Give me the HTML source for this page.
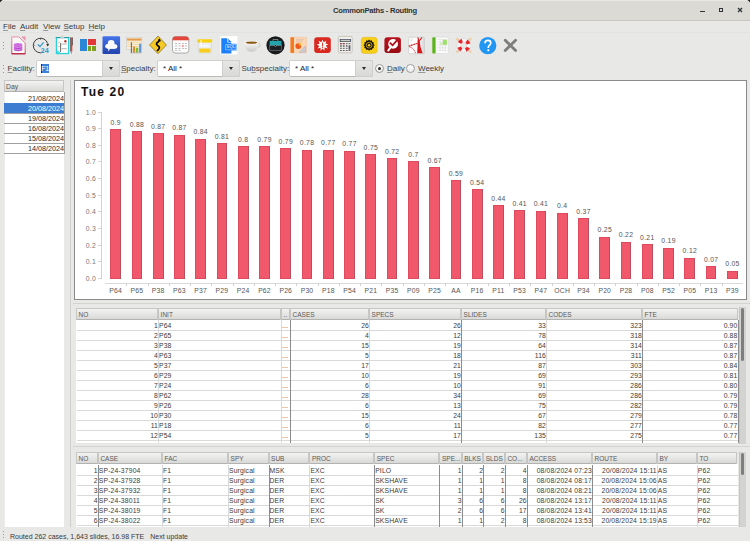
<!DOCTYPE html><html><head><meta charset="utf-8"><style>
*{margin:0;padding:0;box-sizing:border-box}
html,body{width:750px;height:541px;overflow:hidden;background:#e8e8e7;font-family:"Liberation Sans",sans-serif;color:#2e3436;position:relative}
.abs{position:absolute}
.t{position:absolute;white-space:nowrap;line-height:1}
#title{left:0;top:0;width:750px;height:21px;background:#dcdad5;border-bottom:1px solid #c9c6c1}
.menu{font-size:8px;top:23px;color:#3a3a3a}
u{text-decoration:underline;text-decoration-thickness:0.6px;text-underline-offset:0.6px;text-decoration-color:#9a9a9a}
.ico{position:absolute;top:36px;width:18px;height:18px}
.grip{position:absolute;width:1px;height:1px;background:#9a9a9a}
.combo{position:absolute;top:60px;height:17.4px;background:#fff;border:1px solid #cfcfcd;border-bottom-color:#b9b9b7;border-radius:2px}
.cbtn{position:absolute;top:-1px;right:-1px;height:17.4px;width:18px;background:linear-gradient(#e6e6e5,#d9d9d8);border:1px solid #cfcfcd;border-radius:0 2px 2px 0}
.cbtn:after{content:"";position:absolute;left:6px;top:6px;border-left:2.9px solid transparent;border-right:2.9px solid transparent;border-top:3px solid #2a2a2a}
.lbl{font-size:8px;top:65px;color:#3c3c3c}
.hdr{position:absolute;height:12px;background:linear-gradient(#f3f3f2,#d9d9d8);border:1px solid #c6c6c4;border-bottom-color:#b2b2b0;border-radius:1px;font-size:6.5px;color:#5a5a5a;padding-left:1.6px;line-height:11px;overflow:hidden;white-space:nowrap}
.cell{position:absolute;height:10px;font-size:6.8px;line-height:11px;letter-spacing:0.15px;white-space:nowrap;overflow:hidden;color:#3a3a3a}
.r{text-align:right}
</style></head><body>
<div id="title" class="abs"></div>
<div class="abs" style="left:0;top:0;width:3px;height:3px;background:radial-gradient(circle at 3px 3px,transparent 2.5px,#222 3px)"></div>
<div class="abs" style="right:0;top:0;width:3px;height:3px;background:radial-gradient(circle at 0 3px,transparent 2.5px,#222 3px)"></div>
<div class="t" style="left:0;width:750px;text-align:center;top:7px;font-size:7.6px;letter-spacing:-0.25px;font-weight:bold;color:#2e3436">CommonPaths - Routing</div>
<div class="abs" style="left:700px;top:11px;width:4.5px;height:1.1px;background:#2e3436"></div>
<div class="abs" style="left:719px;top:8px;width:4px;height:4px;border:1.2px solid #2e3436"></div>
<svg class="abs" style="left:737px;top:7px" width="6" height="6" viewBox="0 0 6 6"><path d="M1 1L5 5M5 1L1 5" stroke="#2e3436" stroke-width="1.3"/></svg>
<div class="abs" style="left:0;top:32px;width:750px;height:1px;background:#e2e2e0"></div>
<div class="abs" style="left:3px;top:0;width:744px;height:1px;background:#e9e7e3"></div>
<div class="t menu" style="left:3px"><u>F</u>ile</div>
<div class="t menu" style="left:20px"><u>A</u>udit</div>
<div class="t menu" style="left:43px"><u>V</u>iew</div>
<div class="t menu" style="left:63.5px"><u>S</u>etup</div>
<div class="t menu" style="left:88.5px"><u>H</u>elp</div>
<div class="grip" style="left:3px;top:41.5px"></div>
<div class="grip" style="left:3px;top:44.8px"></div>
<div class="grip" style="left:3px;top:48px"></div>
<div class="grip" style="left:3px;top:64.8px"></div>
<div class="grip" style="left:3px;top:68px"></div>
<div class="grip" style="left:3px;top:71.5px"></div>
<svg class="abs" style="left:10.5px;top:35.5px;overflow:visible" width="15" height="19" viewBox="0 0 15 19">
<defs><linearGradient id="g1" x1="0" y1="0" x2="0" y2="1"><stop offset="0" stop-color="#ea8aa6"/><stop offset="1" stop-color="#c2354f"/></linearGradient>
<linearGradient id="p1" x1="0" y1="0" x2="0" y2="1"><stop offset="0" stop-color="#d774e6"/><stop offset="1" stop-color="#b040c8"/></linearGradient></defs>
<path d="M0.8 0.9H7.9L14.2 7V17.8H0.8Z" fill="#f8f8f7" stroke="url(#g1)" stroke-width="0.9"/>
<rect x="0.6" y="17.2" width="13.8" height="1.1" fill="#b8203c"/>
<path d="M10.4 0.5H14.5V4.9Z" fill="#e890ac"/>
<ellipse cx="7.1" cy="13.6" rx="4.2" ry="1.6" fill="url(#p1)"/>
<rect x="2.9" y="8.6" width="8.4" height="5" fill="url(#p1)"/>
<ellipse cx="7.1" cy="8.6" rx="4.2" ry="1.6" fill="#cf6ee0"/>
<path d="M3 10.6Q7.1 12.4 11.2 10.6M3 12.9Q7.1 14.7 11.2 12.9" stroke="#eab4f2" stroke-width="0.55" fill="none"/>
</svg>
<svg class="abs" style="left:32px;top:36.5px;overflow:visible" width="18" height="17" viewBox="0 0 18 17">
<path d="M11.5 15.2A7.3 7.3 0 1 1 15.6 6.5" fill="none" stroke="#2b2b2b" stroke-width="0.9"/>
<path d="M14.2 7.2L15.8 9.6L17.2 6.8Z" fill="#2b2b2b"/>
<path d="M8.6 1.2V2.6" stroke="#2b2b2b" stroke-width="0.8"/>
<circle cx="2.8" cy="8.3" r="0.45" fill="#2b2b2b"/>
<path d="M5.8 7.6L8.0 9.6L11.6 5.4" fill="none" stroke="#3a9ad0" stroke-width="1.3"/>
<text x="8.8" y="16.2" font-family="Liberation Sans" font-weight="bold" font-size="7.2" fill="#3a93c8">24</text>
</svg>
<svg class="abs" style="left:55px;top:35px;overflow:visible" width="18.5" height="20" viewBox="0 0 18.5 20">
<rect x="1.45" y="2.65" width="12.2" height="15.9" fill="#fff" stroke="#2cd0d8" stroke-width="1.3"/>
<rect x="0.8" y="2" width="13.5" height="0.9" fill="#1f9aa0"/>
<path d="M2.2 14.8L5.4 18.2H2.2Z" fill="#30dfe6"/>
<path d="M5 3.6L9.6 3.6L8.6 1.8L7.3 0.3L6 1.8Z" fill="#cfcfcf"/>
<circle cx="10.4" cy="6.2" r="1.2" fill="#b03a30"/>
<path d="M3 6.9L4 7.8L5.6 6.2M3 11L4 11.9L5.6 10.3" stroke="#f0a080" stroke-width="0.7" fill="none"/>
<rect x="5.3" y="8" width="0.8" height="9" fill="#444"/>
<path d="M6.5 9H11.8M6.5 13.7H11.8" stroke="#aaa" stroke-width="0.9"/>
<rect x="15" y="2.4" width="0.8" height="14" fill="#555"/>
<rect x="15.8" y="2.4" width="1.5" height="14" fill="#ee3a3a"/>
<rect x="17.3" y="2.4" width="0.7" height="8" fill="#444"/>
<path d="M16.4 16.4V18.6" stroke="#666" stroke-width="0.7"/>
</svg>
<div class="abs" style="left:80px;top:39px;width:7px;height:12px;background:#2a86d6"></div>
<div class="abs" style="left:87.6px;top:39px;width:8.3px;height:5.9px;background:#e33636"></div>
<div class="abs" style="left:87.6px;top:46px;width:3.6px;height:5px;background:#7e9f1e"></div>
<div class="abs" style="left:92px;top:46px;width:3.9px;height:5px;background:#7e9f1e"></div>
<svg class="abs" style="left:101.5px;top:35.8px;overflow:visible" width="18.4" height="18.4" viewBox="0 0 18.4 18.4">
<defs><linearGradient id="g5" x1="0" y1="0" x2="0" y2="1"><stop offset="0" stop-color="#4273ea"/><stop offset="1" stop-color="#2345ae"/></linearGradient></defs>
<rect x="0.5" y="0.3" width="17.6" height="17.6" rx="1.2" fill="url(#g5)"/>
<g fill="#fbfbfb"><circle cx="9.2" cy="7.5" r="3.4"/><circle cx="5.5" cy="10.3" r="2.3"/><circle cx="13.2" cy="10.4" r="2.2"/><rect x="5.4" y="8.5" width="8" height="4.4"/>
<path d="M6.2 12.5H8.4L6.4 15.2Q5.6 15.3 6.4 14.2Z"/></g>
</svg>
<svg class="abs" style="left:126px;top:36.5px;overflow:visible" width="17" height="17" viewBox="0 0 17 17">
<rect x="0.5" y="0.3" width="15.4" height="12.2" fill="#f6f0e4" stroke="#c8c4bc" stroke-width="0.5"/>
<rect x="1" y="1.5" width="14.5" height="2.1" fill="#e39a4a"/>
<path d="M1 5.2H15.5M1 7.3H15.5M1 9.4H15.5" stroke="#f2d79c" stroke-width="1"/>
<rect x="4.9" y="5.3" width="0.75" height="10.7" fill="#333"/>
<rect x="6.9" y="9.5" width="2.2" height="6.1" fill="#e8892a"/>
<rect x="10" y="10.7" width="2.2" height="4.9" fill="#7cbf2a"/>
<rect x="13.1" y="6.7" width="2.2" height="8.9" fill="#5f95d8"/>
<rect x="4.6" y="15.6" width="11" height="0.6" fill="#999"/>
</svg>
<svg class="abs" style="left:148.5px;top:36px;overflow:visible" width="18" height="18" viewBox="0 0 18 18">
<path d="M9 0.1L17.5 9L9 17.7L0.5 9Z" fill="#f7c924" stroke="#4a3a00" stroke-width="0.5"/>
<path d="M8.4 14.6C9.4 13.4 11.4 12.2 10 10.6C8.6 9.2 6.6 8.8 7.6 7.2C8.4 6 10.2 6.2 10.2 4.2" fill="none" stroke="#000" stroke-width="1.6" stroke-linecap="round"/>
<path d="M8.6 5.4L10.2 2.2L12 5.2Z" fill="#000"/>
</svg>
<svg class="abs" style="left:172.3px;top:36.4px;overflow:visible" width="17.4" height="17.6" viewBox="0 0 17.4 17.6">
<defs><clipPath id="c8"><rect x="0.5" y="0.5" width="16.3" height="16.6" rx="3"/></clipPath></defs>
<rect x="0.5" y="0.5" width="16.3" height="16.6" rx="3" fill="#fbfbfb" stroke="#6a6a6a" stroke-width="0.5"/>
<rect x="0" y="0" width="17.4" height="4.3" fill="#e5453a" clip-path="url(#c8)"/>
<g fill="#bdbdbd"><rect x="3" y="7" width="2.2" height="0.9"/><rect x="6.5" y="7" width="2.2" height="0.9"/><rect x="10" y="7" width="2.2" height="0.9"/><rect x="13" y="7" width="2" height="0.9"/>
<rect x="3" y="9.5" width="2.2" height="0.9"/><rect x="6.5" y="9.5" width="2.2" height="0.9"/><rect x="13" y="9.5" width="2" height="0.9"/>
<rect x="3" y="12" width="2.2" height="0.9"/><rect x="6.5" y="12" width="2.2" height="0.9"/><rect x="10" y="12" width="2.2" height="0.9"/><rect x="13" y="12" width="2" height="0.9"/>
<rect x="3" y="14.2" width="2.2" height="0.8"/><rect x="6.5" y="14.2" width="2.2" height="0.8"/></g>
<rect x="10.3" y="9.2" width="1.2" height="1.5" fill="#e5453a"/>
</svg>
<svg class="abs" style="left:196.8px;top:38.5px;overflow:visible" width="16" height="15" viewBox="0 0 16 15">
<rect x="1.3" y="3.2" width="13.1" height="10.8" rx="0.6" fill="#eceef0" stroke="#d2d4d6" stroke-width="0.6"/>
<rect x="2.1" y="9.5" width="11.3" height="4.1" fill="#f9cd1c"/>
<rect x="0.2" y="0.3" width="15" height="3.3" rx="1.3" fill="#f7d10c"/>
<rect x="3.4" y="1.2" width="1.3" height="5.5" fill="#fdfdfd" opacity="0.85"/>
<rect x="3.2" y="6.5" width="8.6" height="0.9" fill="#fff"/>
</svg>
<svg class="abs" style="left:219.5px;top:35.7px;overflow:visible" width="17.6" height="18.5" viewBox="0 0 17.6 18.5">
<rect x="0.3" y="0.2" width="17.1" height="18.3" fill="#fff"/>
<path d="M1.3 2.3H7.4V6.6H11.4V17.4H1.3Z" fill="#1c7ffb"/>
<path d="M8.3 2.7L11.5 6.1H8.3Z" fill="#1c7ffb"/>
<rect x="4.8" y="7.8" width="11.8" height="6.7" rx="0.6" fill="#1c7ffb"/>
<rect x="5.5" y="8.5" width="10.4" height="5.3" rx="0.4" fill="none" stroke="#fff" stroke-width="0.4"/>
<text x="6.6" y="12.5" font-family="Liberation Sans" font-size="4.2" letter-spacing="0.1" fill="#fff">SQL</text>
</svg>
<svg class="abs" style="left:243.5px;top:39.5px;overflow:visible" width="17" height="12.5" viewBox="0 0 17 12.5">
<defs><linearGradient id="g11" x1="0" y1="0" x2="0" y2="1"><stop offset="0" stop-color="#fafafa"/><stop offset="1" stop-color="#c9c9c9"/></linearGradient></defs>
<circle cx="14" cy="5.2" r="1.9" fill="none" stroke="#d0d0d0" stroke-width="1.2"/>
<path d="M0.8 2.2Q0.6 11.8 7.5 11.8Q14.4 11.8 14.2 2.2Z" fill="url(#g11)"/>
<ellipse cx="7.5" cy="2.3" rx="6.7" ry="1.6" fill="#fff"/>
<ellipse cx="7.5" cy="2.6" rx="5.9" ry="1.2" fill="#8a5a14"/>
</svg>
<svg class="abs" style="left:265.5px;top:35.8px;overflow:visible" width="19" height="18.6" viewBox="0 0 19 18.6">
<circle cx="9.5" cy="9.3" r="9.1" fill="#17191b"/>
<path d="M7 4.9V3.5H12V4.9" fill="none" stroke="#9aa" stroke-width="0.7"/>
<rect x="3.6" y="4.9" width="11.9" height="4.8" fill="#22a3ad"/>
<rect x="3.8" y="9.7" width="11.5" height="5" fill="#1c2024" stroke="#8c9295" stroke-width="0.5"/>
<circle cx="9.5" cy="9.6" r="0.9" fill="#111" stroke="#ccc" stroke-width="0.4"/>
</svg>
<svg class="abs" style="left:290px;top:37px;overflow:visible" width="17" height="16.4" viewBox="0 0 17 16.4">
<rect x="0.5" y="0.3" width="16" height="15.6" rx="0.8" fill="#fbd7b6" stroke="#f0b890" stroke-width="0.4"/>
<rect x="0.5" y="0.3" width="3.5" height="15.6" fill="#f47b20"/>
<path d="M6 2.5H14M6 3.8H13M6 5H12" stroke="#d8b8a0" stroke-width="0.5"/>
<circle cx="8.3" cy="9.1" r="2.9" fill="#f05a1a"/>
<path d="M8.9 5.6A2.9 2.9 0 0 1 11.6 8.4L8.9 8.4Z" fill="#f9bd2a"/>
<path d="M15.5 9L15.5 15.2H9.4Z" fill="#c9ced8" stroke="#9aa0b0" stroke-width="0.4"/>
</svg>
<svg class="abs" style="left:314px;top:37px;overflow:visible" width="17" height="16.2" viewBox="0 0 17 16.2">
<rect x="0.2" y="0.2" width="16.6" height="15.8" rx="3" fill="#d8281f"/>
<path d="M8.5 2.5L9.6 5.2L12.4 3.8L11.4 6.6L14.6 7.2L11.8 8.6L13.8 11.4L10.6 10.6L10.4 13.6L8.6 11.4L6.6 13.8L6.6 10.8L3.6 11.6L5.4 9L2.6 7.6L5.6 6.8L4.6 3.8L7.4 5.2Z" fill="#fff"/>
<rect x="8.1" y="5.6" width="1" height="3.9" fill="#d8281f"/>
<rect x="8.1" y="10" width="1" height="1" fill="#d8281f"/>
</svg>
<svg class="abs" style="left:338.3px;top:36px;overflow:visible" width="14.6" height="17.2" viewBox="0 0 14.6 17.2">
<rect x="0.4" y="0.4" width="13.8" height="16.4" rx="1.2" fill="#f2efe8" stroke="#b8b4ae" stroke-width="0.7"/>
<rect x="1.8" y="3" width="11" height="3" fill="#2c3558"/>
<rect x="2.5" y="3.6" width="9.6" height="1.8" fill="#c8cbb8"/>
<g fill="#555a66"><rect x="2" y="7.2" width="1.8" height="1"/><rect x="4.8" y="7.2" width="1.8" height="1"/><rect x="7.8" y="7.2" width="1.8" height="1"/><rect x="10.6" y="7.2" width="1.8" height="1"/>
<rect x="2" y="9.3" width="1.8" height="1.4"/><rect x="4.8" y="9.3" width="1.8" height="1.4"/><rect x="7.8" y="9.3" width="1.8" height="1.4"/><rect x="10.6" y="9.3" width="1.8" height="4.4"/>
<rect x="2" y="11.8" width="1.8" height="1"/><rect x="4.8" y="11.8" width="1.8" height="1"/><rect x="7.8" y="11.8" width="1.8" height="1"/>
<rect x="2" y="14" width="1.8" height="1"/><rect x="4.8" y="14" width="1.8" height="1"/><rect x="7.8" y="14" width="1.8" height="1"/><rect x="10.6" y="14" width="1.8" height="1"/></g>
<rect x="2" y="7.2" width="1.8" height="1" fill="#b03040"/><rect x="4.8" y="7.2" width="1.8" height="1" fill="#b03040"/>
</svg>
<svg class="abs" style="left:361px;top:36.8px;overflow:visible" width="16.4" height="16.6" viewBox="0 0 16.4 16.6">
<rect x="0.2" y="0.2" width="16" height="16.3" rx="3" fill="#f7cf1a" stroke="#c9a000" stroke-width="0.3"/>
<path d="M13.70 8.20L12.45 9.36L12.95 11.00L11.28 11.38L10.90 13.05L9.26 12.55L8.10 13.80L6.94 12.55L5.30 13.05L4.92 11.38L3.25 11.00L3.75 9.36L2.50 8.20L3.75 7.04L3.25 5.40L4.92 5.02L5.30 3.35L6.94 3.85L8.10 2.60L9.26 3.85L10.90 3.35L11.28 5.02L12.95 5.40L12.45 7.04Z" fill="#1a1206"/>
<circle cx="8.1" cy="8.2" r="2.9" fill="none" stroke="#f7cf1a" stroke-width="0.7"/>
<circle cx="8.1" cy="8.2" r="1.3" fill="#f7cf1a"/>
</svg>
<svg class="abs" style="left:384px;top:36.7px;overflow:visible" width="17.3" height="16.7" viewBox="0 0 17.3 16.7">
<defs><linearGradient id="g17" x1="0" y1="0" x2="0" y2="1"><stop offset="0" stop-color="#b81420"/><stop offset="1" stop-color="#980a12"/></linearGradient></defs>
<rect x="0.4" y="0.3" width="16.5" height="15.8" rx="3" fill="url(#g17)"/>
<circle cx="9.1" cy="6.9" r="4.9" fill="#fff"/>
<path d="M4.2 13.6L6.4 10.6" stroke="#fff" stroke-width="1.9" stroke-linecap="round"/>
<path d="M5.8 5.6L8.6 8.3L13.6 2.6" fill="none" stroke="#ae101b" stroke-width="1.8"/>
<path d="M12.4 1.6L15.2 1.6L15.2 4.6Z" fill="#b41420"/>
</svg>
<svg class="abs" style="left:408px;top:36.7px;overflow:visible" width="16.8" height="16.9" viewBox="0 0 16.8 16.9">
<defs><linearGradient id="g18" x1="0" y1="0" x2="1" y2="0"><stop offset="0.55" stop-color="#fbfbfb"/><stop offset="1" stop-color="#d9d9d9"/></linearGradient></defs>
<rect x="0.6" y="0.2" width="15.8" height="16.6" rx="1.3" fill="url(#g18)" stroke="#bdbdbd" stroke-width="0.5"/>
<path d="M9.6 3.2L11.6 3.2Q11.8 9.5 14.6 16.2L9.2 16.2Q9.6 9 9.6 3.2Z" fill="#d9141a"/>
<path d="M10 0.5L10.6 3.6M13.8 0.5L11.2 4" stroke="#d9141a" stroke-width="1.2"/>
<path d="M0.8 9.1L10 6.2" stroke="#e02028" stroke-width="1.2" stroke-dasharray="1.8 0.5"/>
<path d="M1.4 9.8Q5.8 11 7.6 16.2" fill="none" stroke="#e02028" stroke-width="0.9" stroke-dasharray="1.4 0.6"/>
<path d="M2.8 1.8V3.4Q3.4 4 4 3.4V1.8" fill="none" stroke="#bbb" stroke-width="0.4"/>
</svg>
<svg class="abs" style="left:431.5px;top:36.7px;overflow:visible" width="16.6" height="16.7" viewBox="0 0 16.6 16.7">
<rect x="0.3" y="0.3" width="16" height="16.2" rx="1.2" fill="#fafafa" stroke="#d0d0d0" stroke-width="0.4"/>
<rect x="0.3" y="0.3" width="3.3" height="16.2" rx="1" fill="#5cb51c"/>
<g stroke="#d4d4d4" stroke-width="0.5"><path d="M5.4 2.5H15M5.4 5.3H15M5.4 8H15M5.4 10.8H15M5.4 13.4H15M8.2 2.5V14M10.8 2.5V14M13.4 2.5V14"/></g>
<rect x="10.9" y="2.8" width="4" height="5" fill="#9ee06a"/>
<rect x="8.3" y="5.5" width="2.4" height="2.4" fill="#c8f0a8"/>
</svg>
<svg class="abs" style="left:455px;top:36.5px;overflow:visible" width="17.6" height="17" viewBox="0 0 17.6 17">
<g stroke="#f0c488" stroke-width="2.2" stroke-dasharray="1 0.4"><path d="M1.6 1.4L4.4 4.2M16 1.4L13.2 4.2M1.6 15.4L4.4 12.6M16 15.4L13.2 12.6"/></g>
<circle cx="8.8" cy="8.4" r="4.95" fill="none" stroke="#f6f6f6" stroke-width="3.9"/>
<circle cx="8.8" cy="8.4" r="4.95" fill="none" stroke="#e8242a" stroke-width="3.9" stroke-dasharray="3.4 4.375" stroke-dashoffset="5.585"/>
<circle cx="8.8" cy="8.4" r="6.9" fill="none" stroke="#c4c4c4" stroke-width="0.35"/>
<circle cx="8.8" cy="8.4" r="3" fill="none" stroke="#c4c4c4" stroke-width="0.35"/>
</svg>
<svg class="abs" style="left:478.5px;top:36.5px;overflow:visible" width="17.6" height="17.4" viewBox="0 0 17.6 17.4">
<circle cx="8.8" cy="8.7" r="8.6" fill="#2196f3"/>
<path d="M6 6.3C6 4.2 7.3 3.4 8.9 3.4C10.7 3.4 11.8 4.5 11.8 6C11.8 8 9.3 8.2 9.3 10.4V11" fill="none" stroke="#fff" stroke-width="1.7"/>
<rect x="8.35" y="12.3" width="1.9" height="1.9" fill="#fff"/>
</svg>
<svg class="abs" style="left:503px;top:37.5px;overflow:visible" width="15" height="15" viewBox="0 0 15 15">
<path d="M2.2 2.2L12.6 12.6M12.6 2.2L2.2 12.6" stroke="#7c7e7c" stroke-width="2.8" stroke-linecap="round"/>
</svg>
<div class="t lbl" style="left:7.6px"><u>F</u>acility:</div>
<div class="combo" style="left:35.5px;width:84.5px"><div class="abs" style="left:4.2px;top:3px;width:8px;height:8.8px;background:#3b7fd6"></div><div class="abs" style="left:4.4px;top:3px;width:0.8px;height:8.8px;background:#1a2a3a"></div><div class="t" style="left:4.8px;top:4.2px;font-size:7px;letter-spacing:-0.4px;color:#fff">F1</div><div class="cbtn"></div></div>
<div class="t lbl" style="left:121px"><u>S</u>pecialty:</div>
<div class="combo" style="left:157px;width:83px"><div class="t" style="left:5px;top:4px;font-size:8px;color:#222">* All *</div><div class="cbtn"></div></div>
<div class="t lbl" style="left:241.5px">Su<u>b</u>specialty:</div>
<div class="combo" style="left:289px;width:84px"><div class="t" style="left:5px;top:4px;font-size:8px;color:#222">* All *</div><div class="cbtn"></div></div>
<div class="abs" style="left:375px;top:63.8px;width:9.4px;height:9.4px;border-radius:50%;background:linear-gradient(#fdfdfd,#ececec);border:0.8px solid #9c9c9a"></div>
<div class="abs" style="left:378.2px;top:67px;width:3px;height:3px;border-radius:50%;background:#2a2a2a"></div>
<div class="t lbl" style="left:387px"><u>D</u>aily</div>
<div class="abs" style="left:406px;top:63.8px;width:9.4px;height:9.4px;border-radius:50%;background:linear-gradient(#fdfdfd,#ececec);border:0.8px solid #9c9c9a"></div>
<div class="t lbl" style="left:418px"><u>W</u>eekly</div>
<div class="abs" style="left:4px;top:92px;width:60px;height:435px;background:#fff;border-left:0.6px solid #ececec"></div>
<div class="hdr" style="left:4px;top:80px;width:60px;height:12px;font-size:6.8px;line-height:12px;padding-left:1px;color:#555">Day</div>
<div class="abs" style="left:4px;top:103px;width:60px;height:1px;background:#a0a0a0"></div>
<div class="t" style="left:4px;width:60px;text-align:right;top:95px;font-size:7.2px;color:#2a2a2a">21/08/2024</div>
<div class="abs" style="left:4px;top:103px;width:60px;height:10px;background:#3d7dd1"></div>
<div class="abs" style="left:4px;top:113px;width:60px;height:1px;background:#a0a0a0"></div>
<div class="t" style="left:4px;width:60px;text-align:right;top:105px;font-size:7.2px;color:#fff">20/08/2024</div>
<div class="abs" style="left:4px;top:123px;width:60px;height:1px;background:#a0a0a0"></div>
<div class="t" style="left:4px;width:60px;text-align:right;top:115px;font-size:7.2px;color:#2a2a2a">19/08/2024</div>
<div class="abs" style="left:4px;top:133px;width:60px;height:1px;background:#a0a0a0"></div>
<div class="t" style="left:4px;width:60px;text-align:right;top:125px;font-size:7.2px;color:#2a2a2a">16/08/2024</div>
<div class="abs" style="left:4px;top:143px;width:60px;height:1px;background:#a0a0a0"></div>
<div class="t" style="left:4px;width:60px;text-align:right;top:135px;font-size:7.2px;color:#2a2a2a">15/08/2024</div>
<div class="abs" style="left:4px;top:153px;width:60px;height:1px;background:#a0a0a0"></div>
<div class="t" style="left:4px;width:60px;text-align:right;top:145px;font-size:7.2px;color:#2a2a2a">14/08/2024</div>
<div class="abs" style="left:63.5px;top:92px;width:1px;height:62px;background:#a0a0a0"></div>
<div class="abs" style="left:70px;top:80px;width:1px;height:447px;background:#cfcfcd"></div>
<div class="abs" style="left:74px;top:80px;width:673px;height:220px;background:#fff;border:1px solid #8a8a8a"></div>
<div class="t" style="left:81px;top:86px;font-size:12px;letter-spacing:1.2px;font-weight:bold;color:#111">Tue 20</div>
<div class="abs" style="left:101px;top:112px;width:1px;height:167px;background:#d2d2d2"></div>
<div class="abs" style="left:98px;top:278px;width:3px;height:1px;background:#d2d2d2"></div>
<div class="t" style="left:82px;width:14px;text-align:right;top:276.0px;font-size:6.8px;letter-spacing:0.3px;color:#777">0.0</div>
<div class="abs" style="left:98px;top:261px;width:3px;height:1px;background:#d2d2d2"></div>
<div class="t" style="left:82px;width:14px;text-align:right;top:259.0px;font-size:6.8px;letter-spacing:0.3px;color:#777">0.1</div>
<div class="abs" style="left:98px;top:245px;width:3px;height:1px;background:#d2d2d2"></div>
<div class="t" style="left:82px;width:14px;text-align:right;top:243.0px;font-size:6.8px;letter-spacing:0.3px;color:#777">0.2</div>
<div class="abs" style="left:98px;top:228px;width:3px;height:1px;background:#d2d2d2"></div>
<div class="t" style="left:82px;width:14px;text-align:right;top:226.0px;font-size:6.8px;letter-spacing:0.3px;color:#777">0.3</div>
<div class="abs" style="left:98px;top:211px;width:3px;height:1px;background:#d2d2d2"></div>
<div class="t" style="left:82px;width:14px;text-align:right;top:209.0px;font-size:6.8px;letter-spacing:0.3px;color:#777">0.4</div>
<div class="abs" style="left:98px;top:195px;width:3px;height:1px;background:#d2d2d2"></div>
<div class="t" style="left:82px;width:14px;text-align:right;top:193.0px;font-size:6.8px;letter-spacing:0.3px;color:#777">0.5</div>
<div class="abs" style="left:98px;top:178px;width:3px;height:1px;background:#d2d2d2"></div>
<div class="t" style="left:82px;width:14px;text-align:right;top:176.0px;font-size:6.8px;letter-spacing:0.3px;color:#777">0.6</div>
<div class="abs" style="left:98px;top:161px;width:3px;height:1px;background:#d2d2d2"></div>
<div class="t" style="left:82px;width:14px;text-align:right;top:159.0px;font-size:6.8px;letter-spacing:0.3px;color:#777">0.7</div>
<div class="abs" style="left:98px;top:145px;width:3px;height:1px;background:#d2d2d2"></div>
<div class="t" style="left:82px;width:14px;text-align:right;top:143.0px;font-size:6.8px;letter-spacing:0.3px;color:#777">0.8</div>
<div class="abs" style="left:98px;top:128px;width:3px;height:1px;background:#d2d2d2"></div>
<div class="t" style="left:82px;width:14px;text-align:right;top:126.0px;font-size:6.8px;letter-spacing:0.3px;color:#777">0.9</div>
<div class="abs" style="left:98px;top:112px;width:3px;height:1px;background:#d2d2d2"></div>
<div class="t" style="left:82px;width:14px;text-align:right;top:110.0px;font-size:6.8px;letter-spacing:0.3px;color:#777">1.0</div>
<div class="abs" style="left:105px;top:283px;width:638px;height:1px;background:#dadada"></div>
<div class="abs" style="left:110.23px;top:129.00px;width:10.8px;height:150.00px;background:#f1586b;border:0.5px solid #e04a5e;border-right:0.8px solid #b84d5d"></div>
<div class="t" style="left:100.63px;width:30px;text-align:center;top:119.70px;font-size:6.8px;letter-spacing:0.3px;color:#555">0.9</div>
<div class="t" style="left:100.63px;width:30px;text-align:center;top:288px;font-size:6.8px;letter-spacing:0.2px;color:#555">P64</div>
<div class="abs" style="left:131.50px;top:131.00px;width:10.8px;height:148.00px;background:#f1586b;border:0.5px solid #e04a5e;border-right:0.8px solid #b84d5d"></div>
<div class="t" style="left:121.90px;width:30px;text-align:center;top:121.70px;font-size:6.8px;letter-spacing:0.3px;color:#555">0.88</div>
<div class="t" style="left:121.90px;width:30px;text-align:center;top:288px;font-size:6.8px;letter-spacing:0.2px;color:#555">P65</div>
<div class="abs" style="left:126.27px;top:283px;width:1px;height:3px;background:#d0d0d0"></div>
<div class="abs" style="left:152.77px;top:133.00px;width:10.8px;height:146.00px;background:#f1586b;border:0.5px solid #e04a5e;border-right:0.8px solid #b84d5d"></div>
<div class="t" style="left:143.17px;width:30px;text-align:center;top:123.70px;font-size:6.8px;letter-spacing:0.3px;color:#555">0.87</div>
<div class="t" style="left:143.17px;width:30px;text-align:center;top:288px;font-size:6.8px;letter-spacing:0.2px;color:#555">P38</div>
<div class="abs" style="left:147.53px;top:283px;width:1px;height:3px;background:#d0d0d0"></div>
<div class="abs" style="left:174.03px;top:134.60px;width:10.8px;height:144.40px;background:#f1586b;border:0.5px solid #e04a5e;border-right:0.8px solid #b84d5d"></div>
<div class="t" style="left:164.43px;width:30px;text-align:center;top:125.30px;font-size:6.8px;letter-spacing:0.3px;color:#555">0.87</div>
<div class="t" style="left:164.43px;width:30px;text-align:center;top:288px;font-size:6.8px;letter-spacing:0.2px;color:#555">P63</div>
<div class="abs" style="left:168.80px;top:283px;width:1px;height:3px;background:#d0d0d0"></div>
<div class="abs" style="left:195.30px;top:138.60px;width:10.8px;height:140.40px;background:#f1586b;border:0.5px solid #e04a5e;border-right:0.8px solid #b84d5d"></div>
<div class="t" style="left:185.70px;width:30px;text-align:center;top:129.30px;font-size:6.8px;letter-spacing:0.3px;color:#555">0.84</div>
<div class="t" style="left:185.70px;width:30px;text-align:center;top:288px;font-size:6.8px;letter-spacing:0.2px;color:#555">P37</div>
<div class="abs" style="left:190.07px;top:283px;width:1px;height:3px;background:#d0d0d0"></div>
<div class="abs" style="left:216.57px;top:143.00px;width:10.8px;height:136.00px;background:#f1586b;border:0.5px solid #e04a5e;border-right:0.8px solid #b84d5d"></div>
<div class="t" style="left:206.97px;width:30px;text-align:center;top:133.70px;font-size:6.8px;letter-spacing:0.3px;color:#555">0.81</div>
<div class="t" style="left:206.97px;width:30px;text-align:center;top:288px;font-size:6.8px;letter-spacing:0.2px;color:#555">P29</div>
<div class="abs" style="left:211.33px;top:283px;width:1px;height:3px;background:#d0d0d0"></div>
<div class="abs" style="left:237.83px;top:146.00px;width:10.8px;height:133.00px;background:#f1586b;border:0.5px solid #e04a5e;border-right:0.8px solid #b84d5d"></div>
<div class="t" style="left:228.23px;width:30px;text-align:center;top:136.70px;font-size:6.8px;letter-spacing:0.3px;color:#555">0.8</div>
<div class="t" style="left:228.23px;width:30px;text-align:center;top:288px;font-size:6.8px;letter-spacing:0.2px;color:#555">P24</div>
<div class="abs" style="left:232.60px;top:283px;width:1px;height:3px;background:#d0d0d0"></div>
<div class="abs" style="left:259.10px;top:146.00px;width:10.8px;height:133.00px;background:#f1586b;border:0.5px solid #e04a5e;border-right:0.8px solid #b84d5d"></div>
<div class="t" style="left:249.50px;width:30px;text-align:center;top:136.70px;font-size:6.8px;letter-spacing:0.3px;color:#555">0.79</div>
<div class="t" style="left:249.50px;width:30px;text-align:center;top:288px;font-size:6.8px;letter-spacing:0.2px;color:#555">P62</div>
<div class="abs" style="left:253.87px;top:283px;width:1px;height:3px;background:#d0d0d0"></div>
<div class="abs" style="left:280.37px;top:148.00px;width:10.8px;height:131.00px;background:#f1586b;border:0.5px solid #e04a5e;border-right:0.8px solid #b84d5d"></div>
<div class="t" style="left:270.77px;width:30px;text-align:center;top:138.70px;font-size:6.8px;letter-spacing:0.3px;color:#555">0.79</div>
<div class="t" style="left:270.77px;width:30px;text-align:center;top:288px;font-size:6.8px;letter-spacing:0.2px;color:#555">P26</div>
<div class="abs" style="left:275.13px;top:283px;width:1px;height:3px;background:#d0d0d0"></div>
<div class="abs" style="left:301.63px;top:149.60px;width:10.8px;height:129.40px;background:#f1586b;border:0.5px solid #e04a5e;border-right:0.8px solid #b84d5d"></div>
<div class="t" style="left:292.03px;width:30px;text-align:center;top:140.30px;font-size:6.8px;letter-spacing:0.3px;color:#555">0.78</div>
<div class="t" style="left:292.03px;width:30px;text-align:center;top:288px;font-size:6.8px;letter-spacing:0.2px;color:#555">P30</div>
<div class="abs" style="left:296.40px;top:283px;width:1px;height:3px;background:#d0d0d0"></div>
<div class="abs" style="left:322.90px;top:149.60px;width:10.8px;height:129.40px;background:#f1586b;border:0.5px solid #e04a5e;border-right:0.8px solid #b84d5d"></div>
<div class="t" style="left:313.30px;width:30px;text-align:center;top:140.30px;font-size:6.8px;letter-spacing:0.3px;color:#555">0.77</div>
<div class="t" style="left:313.30px;width:30px;text-align:center;top:288px;font-size:6.8px;letter-spacing:0.2px;color:#555">P18</div>
<div class="abs" style="left:317.67px;top:283px;width:1px;height:3px;background:#d0d0d0"></div>
<div class="abs" style="left:344.17px;top:150.60px;width:10.8px;height:128.40px;background:#f1586b;border:0.5px solid #e04a5e;border-right:0.8px solid #b84d5d"></div>
<div class="t" style="left:334.57px;width:30px;text-align:center;top:141.30px;font-size:6.8px;letter-spacing:0.3px;color:#555">0.77</div>
<div class="t" style="left:334.57px;width:30px;text-align:center;top:288px;font-size:6.8px;letter-spacing:0.2px;color:#555">P54</div>
<div class="abs" style="left:338.93px;top:283px;width:1px;height:3px;background:#d0d0d0"></div>
<div class="abs" style="left:365.43px;top:154.00px;width:10.8px;height:125.00px;background:#f1586b;border:0.5px solid #e04a5e;border-right:0.8px solid #b84d5d"></div>
<div class="t" style="left:355.83px;width:30px;text-align:center;top:144.70px;font-size:6.8px;letter-spacing:0.3px;color:#555">0.75</div>
<div class="t" style="left:355.83px;width:30px;text-align:center;top:288px;font-size:6.8px;letter-spacing:0.2px;color:#555">P21</div>
<div class="abs" style="left:360.20px;top:283px;width:1px;height:3px;background:#d0d0d0"></div>
<div class="abs" style="left:386.70px;top:158.00px;width:10.8px;height:121.00px;background:#f1586b;border:0.5px solid #e04a5e;border-right:0.8px solid #b84d5d"></div>
<div class="t" style="left:377.10px;width:30px;text-align:center;top:148.70px;font-size:6.8px;letter-spacing:0.3px;color:#555">0.72</div>
<div class="t" style="left:377.10px;width:30px;text-align:center;top:288px;font-size:6.8px;letter-spacing:0.2px;color:#555">P35</div>
<div class="abs" style="left:381.47px;top:283px;width:1px;height:3px;background:#d0d0d0"></div>
<div class="abs" style="left:407.97px;top:161.00px;width:10.8px;height:118.00px;background:#f1586b;border:0.5px solid #e04a5e;border-right:0.8px solid #b84d5d"></div>
<div class="t" style="left:398.37px;width:30px;text-align:center;top:151.70px;font-size:6.8px;letter-spacing:0.3px;color:#555">0.7</div>
<div class="t" style="left:398.37px;width:30px;text-align:center;top:288px;font-size:6.8px;letter-spacing:0.2px;color:#555">P09</div>
<div class="abs" style="left:402.73px;top:283px;width:1px;height:3px;background:#d0d0d0"></div>
<div class="abs" style="left:429.23px;top:167.00px;width:10.8px;height:112.00px;background:#f1586b;border:0.5px solid #e04a5e;border-right:0.8px solid #b84d5d"></div>
<div class="t" style="left:419.63px;width:30px;text-align:center;top:157.70px;font-size:6.8px;letter-spacing:0.3px;color:#555">0.67</div>
<div class="t" style="left:419.63px;width:30px;text-align:center;top:288px;font-size:6.8px;letter-spacing:0.2px;color:#555">P25</div>
<div class="abs" style="left:424.00px;top:283px;width:1px;height:3px;background:#d0d0d0"></div>
<div class="abs" style="left:450.50px;top:180.00px;width:10.8px;height:99.00px;background:#f1586b;border:0.5px solid #e04a5e;border-right:0.8px solid #b84d5d"></div>
<div class="t" style="left:440.90px;width:30px;text-align:center;top:170.70px;font-size:6.8px;letter-spacing:0.3px;color:#555">0.59</div>
<div class="t" style="left:440.90px;width:30px;text-align:center;top:288px;font-size:6.8px;letter-spacing:0.2px;color:#555">AA</div>
<div class="abs" style="left:445.27px;top:283px;width:1px;height:3px;background:#d0d0d0"></div>
<div class="abs" style="left:471.77px;top:189.00px;width:10.8px;height:90.00px;background:#f1586b;border:0.5px solid #e04a5e;border-right:0.8px solid #b84d5d"></div>
<div class="t" style="left:462.17px;width:30px;text-align:center;top:179.70px;font-size:6.8px;letter-spacing:0.3px;color:#555">0.54</div>
<div class="t" style="left:462.17px;width:30px;text-align:center;top:288px;font-size:6.8px;letter-spacing:0.2px;color:#555">P16</div>
<div class="abs" style="left:466.53px;top:283px;width:1px;height:3px;background:#d0d0d0"></div>
<div class="abs" style="left:493.03px;top:205.00px;width:10.8px;height:74.00px;background:#f1586b;border:0.5px solid #e04a5e;border-right:0.8px solid #b84d5d"></div>
<div class="t" style="left:483.43px;width:30px;text-align:center;top:195.70px;font-size:6.8px;letter-spacing:0.3px;color:#555">0.44</div>
<div class="t" style="left:483.43px;width:30px;text-align:center;top:288px;font-size:6.8px;letter-spacing:0.2px;color:#555">P11</div>
<div class="abs" style="left:487.80px;top:283px;width:1px;height:3px;background:#d0d0d0"></div>
<div class="abs" style="left:514.30px;top:210.00px;width:10.8px;height:69.00px;background:#f1586b;border:0.5px solid #e04a5e;border-right:0.8px solid #b84d5d"></div>
<div class="t" style="left:504.70px;width:30px;text-align:center;top:200.70px;font-size:6.8px;letter-spacing:0.3px;color:#555">0.41</div>
<div class="t" style="left:504.70px;width:30px;text-align:center;top:288px;font-size:6.8px;letter-spacing:0.2px;color:#555">P53</div>
<div class="abs" style="left:509.07px;top:283px;width:1px;height:3px;background:#d0d0d0"></div>
<div class="abs" style="left:535.57px;top:210.60px;width:10.8px;height:68.40px;background:#f1586b;border:0.5px solid #e04a5e;border-right:0.8px solid #b84d5d"></div>
<div class="t" style="left:525.97px;width:30px;text-align:center;top:201.30px;font-size:6.8px;letter-spacing:0.3px;color:#555">0.41</div>
<div class="t" style="left:525.97px;width:30px;text-align:center;top:288px;font-size:6.8px;letter-spacing:0.2px;color:#555">P47</div>
<div class="abs" style="left:530.33px;top:283px;width:1px;height:3px;background:#d0d0d0"></div>
<div class="abs" style="left:556.83px;top:212.60px;width:10.8px;height:66.40px;background:#f1586b;border:0.5px solid #e04a5e;border-right:0.8px solid #b84d5d"></div>
<div class="t" style="left:547.23px;width:30px;text-align:center;top:203.30px;font-size:6.8px;letter-spacing:0.3px;color:#555">0.4</div>
<div class="t" style="left:547.23px;width:30px;text-align:center;top:288px;font-size:6.8px;letter-spacing:0.2px;color:#555">OCH</div>
<div class="abs" style="left:551.60px;top:283px;width:1px;height:3px;background:#d0d0d0"></div>
<div class="abs" style="left:578.10px;top:218.00px;width:10.8px;height:61.00px;background:#f1586b;border:0.5px solid #e04a5e;border-right:0.8px solid #b84d5d"></div>
<div class="t" style="left:568.50px;width:30px;text-align:center;top:208.70px;font-size:6.8px;letter-spacing:0.3px;color:#555">0.37</div>
<div class="t" style="left:568.50px;width:30px;text-align:center;top:288px;font-size:6.8px;letter-spacing:0.2px;color:#555">P34</div>
<div class="abs" style="left:572.87px;top:283px;width:1px;height:3px;background:#d0d0d0"></div>
<div class="abs" style="left:599.37px;top:236.50px;width:10.8px;height:42.50px;background:#f1586b;border:0.5px solid #e04a5e;border-right:0.8px solid #b84d5d"></div>
<div class="t" style="left:589.77px;width:30px;text-align:center;top:227.20px;font-size:6.8px;letter-spacing:0.3px;color:#555">0.25</div>
<div class="t" style="left:589.77px;width:30px;text-align:center;top:288px;font-size:6.8px;letter-spacing:0.2px;color:#555">P20</div>
<div class="abs" style="left:594.13px;top:283px;width:1px;height:3px;background:#d0d0d0"></div>
<div class="abs" style="left:620.63px;top:241.60px;width:10.8px;height:37.40px;background:#f1586b;border:0.5px solid #e04a5e;border-right:0.8px solid #b84d5d"></div>
<div class="t" style="left:611.03px;width:30px;text-align:center;top:232.30px;font-size:6.8px;letter-spacing:0.3px;color:#555">0.22</div>
<div class="t" style="left:611.03px;width:30px;text-align:center;top:288px;font-size:6.8px;letter-spacing:0.2px;color:#555">P28</div>
<div class="abs" style="left:615.40px;top:283px;width:1px;height:3px;background:#d0d0d0"></div>
<div class="abs" style="left:641.90px;top:244.00px;width:10.8px;height:35.00px;background:#f1586b;border:0.5px solid #e04a5e;border-right:0.8px solid #b84d5d"></div>
<div class="t" style="left:632.30px;width:30px;text-align:center;top:234.70px;font-size:6.8px;letter-spacing:0.3px;color:#555">0.21</div>
<div class="t" style="left:632.30px;width:30px;text-align:center;top:288px;font-size:6.8px;letter-spacing:0.2px;color:#555">P08</div>
<div class="abs" style="left:636.67px;top:283px;width:1px;height:3px;background:#d0d0d0"></div>
<div class="abs" style="left:663.17px;top:247.60px;width:10.8px;height:31.40px;background:#f1586b;border:0.5px solid #e04a5e;border-right:0.8px solid #b84d5d"></div>
<div class="t" style="left:653.57px;width:30px;text-align:center;top:238.30px;font-size:6.8px;letter-spacing:0.3px;color:#555">0.19</div>
<div class="t" style="left:653.57px;width:30px;text-align:center;top:288px;font-size:6.8px;letter-spacing:0.2px;color:#555">P52</div>
<div class="abs" style="left:657.93px;top:283px;width:1px;height:3px;background:#d0d0d0"></div>
<div class="abs" style="left:684.43px;top:257.60px;width:10.8px;height:21.40px;background:#f1586b;border:0.5px solid #e04a5e;border-right:0.8px solid #b84d5d"></div>
<div class="t" style="left:674.83px;width:30px;text-align:center;top:248.30px;font-size:6.8px;letter-spacing:0.3px;color:#555">0.12</div>
<div class="t" style="left:674.83px;width:30px;text-align:center;top:288px;font-size:6.8px;letter-spacing:0.2px;color:#555">P05</div>
<div class="abs" style="left:679.20px;top:283px;width:1px;height:3px;background:#d0d0d0"></div>
<div class="abs" style="left:705.70px;top:266.00px;width:10.8px;height:13.00px;background:#f1586b;border:0.5px solid #e04a5e;border-right:0.8px solid #b84d5d"></div>
<div class="t" style="left:696.10px;width:30px;text-align:center;top:256.70px;font-size:6.8px;letter-spacing:0.3px;color:#555">0.07</div>
<div class="t" style="left:696.10px;width:30px;text-align:center;top:288px;font-size:6.8px;letter-spacing:0.2px;color:#555">P13</div>
<div class="abs" style="left:700.47px;top:283px;width:1px;height:3px;background:#d0d0d0"></div>
<div class="abs" style="left:726.97px;top:270.60px;width:10.8px;height:8.40px;background:#f1586b;border:0.5px solid #e04a5e;border-right:0.8px solid #b84d5d"></div>
<div class="t" style="left:717.37px;width:30px;text-align:center;top:261.30px;font-size:6.8px;letter-spacing:0.3px;color:#555">0.05</div>
<div class="t" style="left:717.37px;width:30px;text-align:center;top:288px;font-size:6.8px;letter-spacing:0.2px;color:#555">P39</div>
<div class="abs" style="left:721.73px;top:283px;width:1px;height:3px;background:#d0d0d0"></div>
<div class="abs" style="left:73px;top:303px;width:677px;height:1px;background:#d4d4d2"></div>
<div class="abs" style="left:73px;top:446px;width:677px;height:1px;background:#d4d4d2"></div>
<div class="abs" style="left:76px;top:320px;width:662px;height:123px;background:#fff"></div>
<div class="hdr" style="left:76px;top:308px;width:82px">NO</div>
<div class="hdr" style="left:158px;top:308px;width:123px">INIT</div>
<div class="hdr" style="left:281px;top:308px;width:9px">..</div>
<div class="hdr" style="left:290px;top:308px;width:79px">CASES</div>
<div class="hdr" style="left:369px;top:308px;width:92px">SPECS</div>
<div class="hdr" style="left:461px;top:308px;width:85px">SLIDES</div>
<div class="hdr" style="left:546px;top:308px;width:96px">CODES</div>
<div class="hdr" style="left:642px;top:308px;width:95.5px">FTE</div>
<div class="abs" style="left:76.5px;top:330px;width:661px;height:1px;background:#d9d9d9"></div>
<div class="cell r" style="left:76px;top:320px;width:82px">1</div>
<div class="cell" style="left:159px;top:320px;width:122px">P64</div>
<div class="cell" style="left:282px;top:320px;width:8px">...</div>
<div class="cell r" style="left:290px;top:320px;width:79px">26</div>
<div class="cell r" style="left:369px;top:320px;width:92px">26</div>
<div class="cell r" style="left:461px;top:320px;width:85px">33</div>
<div class="cell r" style="left:546px;top:320px;width:96px">323</div>
<div class="cell r" style="left:642px;top:320px;width:95.5px">0.90</div>
<div class="abs" style="left:76.5px;top:340px;width:661px;height:1px;background:#d9d9d9"></div>
<div class="cell r" style="left:76px;top:330px;width:82px">2</div>
<div class="cell" style="left:159px;top:330px;width:122px">P65</div>
<div class="cell" style="left:282px;top:330px;width:8px">...</div>
<div class="cell r" style="left:290px;top:330px;width:79px">4</div>
<div class="cell r" style="left:369px;top:330px;width:92px">12</div>
<div class="cell r" style="left:461px;top:330px;width:85px">78</div>
<div class="cell r" style="left:546px;top:330px;width:96px">318</div>
<div class="cell r" style="left:642px;top:330px;width:95.5px">0.88</div>
<div class="abs" style="left:76.5px;top:350px;width:661px;height:1px;background:#d9d9d9"></div>
<div class="cell r" style="left:76px;top:340px;width:82px">3</div>
<div class="cell" style="left:159px;top:340px;width:122px">P38</div>
<div class="cell" style="left:282px;top:340px;width:8px">...</div>
<div class="cell r" style="left:290px;top:340px;width:79px">15</div>
<div class="cell r" style="left:369px;top:340px;width:92px">19</div>
<div class="cell r" style="left:461px;top:340px;width:85px">64</div>
<div class="cell r" style="left:546px;top:340px;width:96px">314</div>
<div class="cell r" style="left:642px;top:340px;width:95.5px">0.87</div>
<div class="abs" style="left:76.5px;top:360px;width:661px;height:1px;background:#d9d9d9"></div>
<div class="cell r" style="left:76px;top:350px;width:82px">4</div>
<div class="cell" style="left:159px;top:350px;width:122px">P63</div>
<div class="cell" style="left:282px;top:350px;width:8px">...</div>
<div class="cell r" style="left:290px;top:350px;width:79px">5</div>
<div class="cell r" style="left:369px;top:350px;width:92px">18</div>
<div class="cell r" style="left:461px;top:350px;width:85px">116</div>
<div class="cell r" style="left:546px;top:350px;width:96px">311</div>
<div class="cell r" style="left:642px;top:350px;width:95.5px">0.87</div>
<div class="abs" style="left:76.5px;top:370px;width:661px;height:1px;background:#d9d9d9"></div>
<div class="cell r" style="left:76px;top:360px;width:82px">5</div>
<div class="cell" style="left:159px;top:360px;width:122px">P37</div>
<div class="cell" style="left:282px;top:360px;width:8px">...</div>
<div class="cell r" style="left:290px;top:360px;width:79px">17</div>
<div class="cell r" style="left:369px;top:360px;width:92px">21</div>
<div class="cell r" style="left:461px;top:360px;width:85px">87</div>
<div class="cell r" style="left:546px;top:360px;width:96px">303</div>
<div class="cell r" style="left:642px;top:360px;width:95.5px">0.84</div>
<div class="abs" style="left:76.5px;top:380px;width:661px;height:1px;background:#d9d9d9"></div>
<div class="cell r" style="left:76px;top:370px;width:82px">6</div>
<div class="cell" style="left:159px;top:370px;width:122px">P29</div>
<div class="cell" style="left:282px;top:370px;width:8px">...</div>
<div class="cell r" style="left:290px;top:370px;width:79px">10</div>
<div class="cell r" style="left:369px;top:370px;width:92px">19</div>
<div class="cell r" style="left:461px;top:370px;width:85px">69</div>
<div class="cell r" style="left:546px;top:370px;width:96px">293</div>
<div class="cell r" style="left:642px;top:370px;width:95.5px">0.81</div>
<div class="abs" style="left:76.5px;top:390px;width:661px;height:1px;background:#d9d9d9"></div>
<div class="cell r" style="left:76px;top:380px;width:82px">7</div>
<div class="cell" style="left:159px;top:380px;width:122px">P24</div>
<div class="cell" style="left:282px;top:380px;width:8px">...</div>
<div class="cell r" style="left:290px;top:380px;width:79px">6</div>
<div class="cell r" style="left:369px;top:380px;width:92px">10</div>
<div class="cell r" style="left:461px;top:380px;width:85px">91</div>
<div class="cell r" style="left:546px;top:380px;width:96px">286</div>
<div class="cell r" style="left:642px;top:380px;width:95.5px">0.80</div>
<div class="abs" style="left:76.5px;top:400px;width:661px;height:1px;background:#d9d9d9"></div>
<div class="cell r" style="left:76px;top:390px;width:82px">8</div>
<div class="cell" style="left:159px;top:390px;width:122px">P62</div>
<div class="cell" style="left:282px;top:390px;width:8px">...</div>
<div class="cell r" style="left:290px;top:390px;width:79px">28</div>
<div class="cell r" style="left:369px;top:390px;width:92px">34</div>
<div class="cell r" style="left:461px;top:390px;width:85px">69</div>
<div class="cell r" style="left:546px;top:390px;width:96px">286</div>
<div class="cell r" style="left:642px;top:390px;width:95.5px">0.79</div>
<div class="abs" style="left:76.5px;top:410px;width:661px;height:1px;background:#d9d9d9"></div>
<div class="cell r" style="left:76px;top:400px;width:82px">9</div>
<div class="cell" style="left:159px;top:400px;width:122px">P26</div>
<div class="cell" style="left:282px;top:400px;width:8px">...</div>
<div class="cell r" style="left:290px;top:400px;width:79px">6</div>
<div class="cell r" style="left:369px;top:400px;width:92px">13</div>
<div class="cell r" style="left:461px;top:400px;width:85px">75</div>
<div class="cell r" style="left:546px;top:400px;width:96px">282</div>
<div class="cell r" style="left:642px;top:400px;width:95.5px">0.79</div>
<div class="abs" style="left:76.5px;top:420px;width:661px;height:1px;background:#d9d9d9"></div>
<div class="cell r" style="left:76px;top:410px;width:82px">10</div>
<div class="cell" style="left:159px;top:410px;width:122px">P30</div>
<div class="cell" style="left:282px;top:410px;width:8px">...</div>
<div class="cell r" style="left:290px;top:410px;width:79px">15</div>
<div class="cell r" style="left:369px;top:410px;width:92px">24</div>
<div class="cell r" style="left:461px;top:410px;width:85px">67</div>
<div class="cell r" style="left:546px;top:410px;width:96px">279</div>
<div class="cell r" style="left:642px;top:410px;width:95.5px">0.78</div>
<div class="abs" style="left:76.5px;top:430px;width:661px;height:1px;background:#d9d9d9"></div>
<div class="cell r" style="left:76px;top:420px;width:82px">11</div>
<div class="cell" style="left:159px;top:420px;width:122px">P18</div>
<div class="cell" style="left:282px;top:420px;width:8px">...</div>
<div class="cell r" style="left:290px;top:420px;width:79px">6</div>
<div class="cell r" style="left:369px;top:420px;width:92px">11</div>
<div class="cell r" style="left:461px;top:420px;width:85px">82</div>
<div class="cell r" style="left:546px;top:420px;width:96px">277</div>
<div class="cell r" style="left:642px;top:420px;width:95.5px">0.77</div>
<div class="abs" style="left:76.5px;top:440px;width:661px;height:1px;background:#d9d9d9"></div>
<div class="cell r" style="left:76px;top:430px;width:82px">12</div>
<div class="cell" style="left:159px;top:430px;width:122px">P54</div>
<div class="cell" style="left:282px;top:430px;width:8px">...</div>
<div class="cell r" style="left:290px;top:430px;width:79px">5</div>
<div class="cell r" style="left:369px;top:430px;width:92px">17</div>
<div class="cell r" style="left:461px;top:430px;width:85px">135</div>
<div class="cell r" style="left:546px;top:430px;width:96px">275</div>
<div class="cell r" style="left:642px;top:430px;width:95.5px">0.77</div>
<div class="abs" style="left:158px;top:320px;width:1px;height:123px;background:#d9d9d9"></div>
<div class="abs" style="left:281px;top:320px;width:1px;height:123px;background:#d9d9d9"></div>
<div class="abs" style="left:290px;top:320px;width:1px;height:123px;background:#8c8c8c"></div>
<div class="abs" style="left:369px;top:320px;width:1px;height:123px;background:#d9d9d9"></div>
<div class="abs" style="left:461px;top:320px;width:1px;height:123px;background:#8c8c8c"></div>
<div class="abs" style="left:546px;top:320px;width:1px;height:123px;background:#d9d9d9"></div>
<div class="abs" style="left:642px;top:320px;width:1px;height:123px;background:#8c8c8c"></div>
<div class="abs" style="left:738px;top:320px;width:1px;height:123px;background:#8c8c8c"></div>
<div class="abs" style="left:739px;top:307px;width:7px;height:137px;background:#d3d3d2;border-left:1px solid #c4c4c3"></div>
<div class="abs" style="left:740.7px;top:308.4px;width:3.6px;height:52.4px;background:#7e7e7e;border-radius:1.8px"></div>
<div class="abs" style="left:76px;top:464px;width:662px;height:63px;background:#fff"></div>
<div class="hdr" style="left:76px;top:452px;width:21.799999999999997px">NO</div>
<div class="hdr" style="left:97.8px;top:452px;width:64.2px">CASE</div>
<div class="hdr" style="left:162px;top:452px;width:66px">FAC</div>
<div class="hdr" style="left:228px;top:452px;width:40.5px">SPY</div>
<div class="hdr" style="left:268.5px;top:452px;width:40.89999999999998px">SUB</div>
<div class="hdr" style="left:309.4px;top:452px;width:64.80000000000001px">PROC</div>
<div class="hdr" style="left:374.2px;top:452px;width:65.19999999999999px">SPEC</div>
<div class="hdr" style="left:439.4px;top:452px;width:22.200000000000045px">SPE...</div>
<div class="hdr" style="left:461.6px;top:452px;width:21.599999999999966px">BLKS</div>
<div class="hdr" style="left:483.2px;top:452px;width:21.600000000000023px">SLDS</div>
<div class="hdr" style="left:504.8px;top:452px;width:21.999999999999943px">CO...</div>
<div class="hdr" style="left:526.8px;top:452px;width:65.20000000000005px">ACCESS</div>
<div class="hdr" style="left:592px;top:452px;width:64.79999999999995px">ROUTE</div>
<div class="hdr" style="left:656.8px;top:452px;width:40.0px">BY</div>
<div class="hdr" style="left:696.8px;top:452px;width:40.200000000000045px">TO</div>
<div class="abs" style="left:76.5px;top:475px;width:661px;height:1px;background:#d9d9d9"></div>
<div class="cell r" style="left:76px;top:465px;width:21.799999999999997px">1</div>
<div class="cell" style="left:98.8px;top:465px;width:63.2px">SP-24-37904</div>
<div class="cell" style="left:163px;top:465px;width:65px">F1</div>
<div class="cell" style="left:229px;top:465px;width:39.5px">Surgical</div>
<div class="cell" style="left:269.5px;top:465px;width:39.89999999999998px">MSK</div>
<div class="cell" style="left:310.4px;top:465px;width:63.80000000000001px">EXC</div>
<div class="cell" style="left:375.2px;top:465px;width:64.19999999999999px">PILO</div>
<div class="cell r" style="left:439.4px;top:465px;width:22.200000000000045px">1</div>
<div class="cell r" style="left:461.6px;top:465px;width:21.599999999999966px">2</div>
<div class="cell r" style="left:483.2px;top:465px;width:21.600000000000023px">2</div>
<div class="cell r" style="left:504.8px;top:465px;width:21.999999999999943px">4</div>
<div class="cell r" style="left:526.8px;top:465px;width:65.20000000000005px">08/08/2024 07:23</div>
<div class="cell r" style="left:592px;top:465px;width:64.79999999999995px">20/08/2024 15:11</div>
<div class="cell" style="left:657.8px;top:465px;width:39.0px">AS</div>
<div class="cell" style="left:697.8px;top:465px;width:39.200000000000045px">P62</div>
<div class="abs" style="left:76.5px;top:485px;width:661px;height:1px;background:#d9d9d9"></div>
<div class="cell r" style="left:76px;top:475px;width:21.799999999999997px">2</div>
<div class="cell" style="left:98.8px;top:475px;width:63.2px">SP-24-37928</div>
<div class="cell" style="left:163px;top:475px;width:65px">F1</div>
<div class="cell" style="left:229px;top:475px;width:39.5px">Surgical</div>
<div class="cell" style="left:269.5px;top:475px;width:39.89999999999998px">DER</div>
<div class="cell" style="left:310.4px;top:475px;width:63.80000000000001px">EXC</div>
<div class="cell" style="left:375.2px;top:475px;width:64.19999999999999px">SKSHAVE</div>
<div class="cell r" style="left:439.4px;top:475px;width:22.200000000000045px">1</div>
<div class="cell r" style="left:461.6px;top:475px;width:21.599999999999966px">1</div>
<div class="cell r" style="left:483.2px;top:475px;width:21.600000000000023px">1</div>
<div class="cell r" style="left:504.8px;top:475px;width:21.999999999999943px">8</div>
<div class="cell r" style="left:526.8px;top:475px;width:65.20000000000005px">08/08/2024 08:17</div>
<div class="cell r" style="left:592px;top:475px;width:64.79999999999995px">20/08/2024 15:06</div>
<div class="cell" style="left:657.8px;top:475px;width:39.0px">AS</div>
<div class="cell" style="left:697.8px;top:475px;width:39.200000000000045px">P62</div>
<div class="abs" style="left:76.5px;top:495px;width:661px;height:1px;background:#d9d9d9"></div>
<div class="cell r" style="left:76px;top:485px;width:21.799999999999997px">3</div>
<div class="cell" style="left:98.8px;top:485px;width:63.2px">SP-24-37932</div>
<div class="cell" style="left:163px;top:485px;width:65px">F1</div>
<div class="cell" style="left:229px;top:485px;width:39.5px">Surgical</div>
<div class="cell" style="left:269.5px;top:485px;width:39.89999999999998px">DER</div>
<div class="cell" style="left:310.4px;top:485px;width:63.80000000000001px">EXC</div>
<div class="cell" style="left:375.2px;top:485px;width:64.19999999999999px">SKSHAVE</div>
<div class="cell r" style="left:439.4px;top:485px;width:22.200000000000045px">1</div>
<div class="cell r" style="left:461.6px;top:485px;width:21.599999999999966px">1</div>
<div class="cell r" style="left:483.2px;top:485px;width:21.600000000000023px">1</div>
<div class="cell r" style="left:504.8px;top:485px;width:21.999999999999943px">8</div>
<div class="cell r" style="left:526.8px;top:485px;width:65.20000000000005px">08/08/2024 08:21</div>
<div class="cell r" style="left:592px;top:485px;width:64.79999999999995px">20/08/2024 15:06</div>
<div class="cell" style="left:657.8px;top:485px;width:39.0px">AS</div>
<div class="cell" style="left:697.8px;top:485px;width:39.200000000000045px">P62</div>
<div class="abs" style="left:76.5px;top:505px;width:661px;height:1px;background:#d9d9d9"></div>
<div class="cell r" style="left:76px;top:495px;width:21.799999999999997px">4</div>
<div class="cell" style="left:98.8px;top:495px;width:63.2px">SP-24-38011</div>
<div class="cell" style="left:163px;top:495px;width:65px">F1</div>
<div class="cell" style="left:229px;top:495px;width:39.5px">Surgical</div>
<div class="cell" style="left:269.5px;top:495px;width:39.89999999999998px">DER</div>
<div class="cell" style="left:310.4px;top:495px;width:63.80000000000001px">EXC</div>
<div class="cell" style="left:375.2px;top:495px;width:64.19999999999999px">SK</div>
<div class="cell r" style="left:439.4px;top:495px;width:22.200000000000045px">3</div>
<div class="cell r" style="left:461.6px;top:495px;width:21.599999999999966px">6</div>
<div class="cell r" style="left:483.2px;top:495px;width:21.600000000000023px">6</div>
<div class="cell r" style="left:504.8px;top:495px;width:21.999999999999943px">26</div>
<div class="cell r" style="left:526.8px;top:495px;width:65.20000000000005px">08/08/2024 13:17</div>
<div class="cell r" style="left:592px;top:495px;width:64.79999999999995px">20/08/2024 15:11</div>
<div class="cell" style="left:657.8px;top:495px;width:39.0px">AS</div>
<div class="cell" style="left:697.8px;top:495px;width:39.200000000000045px">P62</div>
<div class="abs" style="left:76.5px;top:515px;width:661px;height:1px;background:#d9d9d9"></div>
<div class="cell r" style="left:76px;top:505px;width:21.799999999999997px">5</div>
<div class="cell" style="left:98.8px;top:505px;width:63.2px">SP-24-38019</div>
<div class="cell" style="left:163px;top:505px;width:65px">F1</div>
<div class="cell" style="left:229px;top:505px;width:39.5px">Surgical</div>
<div class="cell" style="left:269.5px;top:505px;width:39.89999999999998px">DER</div>
<div class="cell" style="left:310.4px;top:505px;width:63.80000000000001px">EXC</div>
<div class="cell" style="left:375.2px;top:505px;width:64.19999999999999px">SK</div>
<div class="cell r" style="left:439.4px;top:505px;width:22.200000000000045px">2</div>
<div class="cell r" style="left:461.6px;top:505px;width:21.599999999999966px">6</div>
<div class="cell r" style="left:483.2px;top:505px;width:21.600000000000023px">6</div>
<div class="cell r" style="left:504.8px;top:505px;width:21.999999999999943px">17</div>
<div class="cell r" style="left:526.8px;top:505px;width:65.20000000000005px">08/08/2024 13:41</div>
<div class="cell r" style="left:592px;top:505px;width:64.79999999999995px">20/08/2024 15:11</div>
<div class="cell" style="left:657.8px;top:505px;width:39.0px">AS</div>
<div class="cell" style="left:697.8px;top:505px;width:39.200000000000045px">P62</div>
<div class="abs" style="left:76.5px;top:525px;width:661px;height:1px;background:#d9d9d9"></div>
<div class="cell r" style="left:76px;top:515px;width:21.799999999999997px">6</div>
<div class="cell" style="left:98.8px;top:515px;width:63.2px">SP-24-38022</div>
<div class="cell" style="left:163px;top:515px;width:65px">F1</div>
<div class="cell" style="left:229px;top:515px;width:39.5px">Surgical</div>
<div class="cell" style="left:269.5px;top:515px;width:39.89999999999998px">DER</div>
<div class="cell" style="left:310.4px;top:515px;width:63.80000000000001px">EXC</div>
<div class="cell" style="left:375.2px;top:515px;width:64.19999999999999px">SKSHAVE</div>
<div class="cell r" style="left:439.4px;top:515px;width:22.200000000000045px">1</div>
<div class="cell r" style="left:461.6px;top:515px;width:21.599999999999966px">1</div>
<div class="cell r" style="left:483.2px;top:515px;width:21.600000000000023px">2</div>
<div class="cell r" style="left:504.8px;top:515px;width:21.999999999999943px">8</div>
<div class="cell r" style="left:526.8px;top:515px;width:65.20000000000005px">08/08/2024 13:53</div>
<div class="cell r" style="left:592px;top:515px;width:64.79999999999995px">20/08/2024 15:19</div>
<div class="cell" style="left:657.8px;top:515px;width:39.0px">AS</div>
<div class="cell" style="left:697.8px;top:515px;width:39.200000000000045px">P62</div>
<div class="abs" style="left:97.8px;top:465px;width:1px;height:62px;background:#8c8c8c"></div>
<div class="abs" style="left:162px;top:465px;width:1px;height:62px;background:#d9d9d9"></div>
<div class="abs" style="left:228px;top:465px;width:1px;height:62px;background:#d9d9d9"></div>
<div class="abs" style="left:268.5px;top:465px;width:1px;height:62px;background:#8c8c8c"></div>
<div class="abs" style="left:309.4px;top:465px;width:1px;height:62px;background:#d9d9d9"></div>
<div class="abs" style="left:374.2px;top:465px;width:1px;height:62px;background:#8c8c8c"></div>
<div class="abs" style="left:439.4px;top:465px;width:1px;height:62px;background:#8c8c8c"></div>
<div class="abs" style="left:461.6px;top:465px;width:1px;height:62px;background:#8c8c8c"></div>
<div class="abs" style="left:483.2px;top:465px;width:1px;height:62px;background:#8c8c8c"></div>
<div class="abs" style="left:504.8px;top:465px;width:1px;height:62px;background:#8c8c8c"></div>
<div class="abs" style="left:526.8px;top:465px;width:1px;height:62px;background:#8c8c8c"></div>
<div class="abs" style="left:592px;top:465px;width:1px;height:62px;background:#8c8c8c"></div>
<div class="abs" style="left:656.8px;top:465px;width:1px;height:62px;background:#d9d9d9"></div>
<div class="abs" style="left:696.8px;top:465px;width:1px;height:62px;background:#d9d9d9"></div>
<div class="abs" style="left:738.7px;top:452px;width:7px;height:75px;background:#d3d3d2;border-left:1px solid #c4c4c3"></div>
<div class="abs" style="left:740.5px;top:453px;width:3.6px;height:22.4px;background:#7e7e7e;border-radius:1.8px"></div>
<div class="abs" style="left:0;top:527px;width:750px;height:14px;background:#e8e8e7"></div>
<div class="grip" style="left:3px;top:531px"></div>
<div class="grip" style="left:3px;top:534px"></div>
<div class="grip" style="left:3px;top:537px"></div>
<div class="t" style="left:10px;top:532.5px;font-size:7px;color:#3a3a3a">Routed 262 cases, 1,643 slides, 16.98 FTE<span style="margin-left:6px">Next update</span></div>
</body></html>
